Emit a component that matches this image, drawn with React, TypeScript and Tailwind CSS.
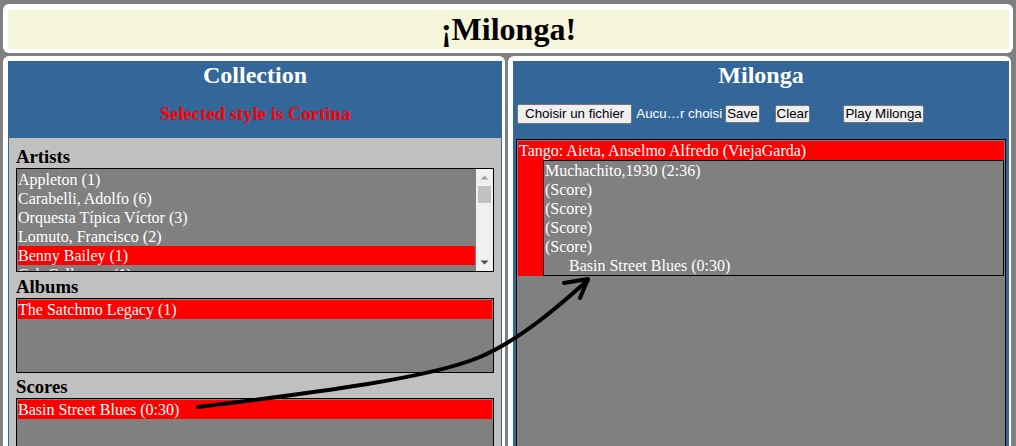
const ARTISTS = [
  "Appleton (1)",
  "Carabelli, Adolfo (6)",
  "Orquesta Típica Víctor (3)",
  "Lomuto, Francisco (2)",
  "Benny Bailey (1)",
  "Cab Calloway (1)",
];

function ListBox({
  items,
  selected,
  height,
  scrollbar,
}: {
  items: string[];
  selected: number;
  height: string;
  scrollbar?: boolean;
}) {
  return (
    <div className={`flex border border-black bg-[#808080] ${height} overflow-hidden`}>
      <div className="flex-1 p-[1px] overflow-hidden">
        {items.map((it, i) => (
          <div
            key={it}
            className={`h-[19px] leading-[19px] whitespace-nowrap text-white ${
              i === selected ? "bg-[#ff0000]" : ""
            }`}
          >
            {it}
          </div>
        ))}
      </div>
      {scrollbar && (
        <div className="w-[17px] bg-[#f0f0f0] flex flex-col items-center">
          <svg width="17" height="17" viewBox="0 0 17 17">
            <path d="M4.5 10.5 L8.5 6.5 L12.5 10.5 Z" fill="#a3a3a3" />
          </svg>
          <div className="w-[13px] h-[17px] bg-[#c1c1c1]" />
          <div className="flex-1" />
          <svg width="17" height="17" viewBox="0 0 17 17">
            <path d="M4.5 6.5 L8.5 10.5 L12.5 6.5 Z" fill="#505050" />
          </svg>
        </div>
      )}
    </div>
  );
}

function Btn({ label, className }: { label: string; className?: string }) {
  return (
    <span
      className={`inline-flex items-center h-[18px] px-[1px] bg-[#efefef] border border-[#767676] rounded-[2px] text-black leading-none ${className ?? ""}`}
    >
      {label}
    </span>
  );
}

export default function App() {
  return (
    <div className="relative h-[446px] w-[1016px] overflow-hidden bg-[#808080] pt-[4px] px-[3px] font-['Liberation_Serif','Times_New_Roman',serif] text-[16px]">
      {/* header */}
      <div className="bg-white rounded-[6px] pt-[6px] pb-[4px] pl-[5px] pr-[4px]">
        <div className="h-[39px] bg-[#f5f5dc] flex items-center justify-center">
          <h1 className="text-[32px] font-bold leading-[39px] text-black">¡Milonga!</h1>
        </div>
      </div>

      <div className="mt-[3px] flex gap-[3px]">
        {/* collection */}
        <div className="w-[502px] h-[420px] bg-white rounded-[6px] pl-[5px] pt-[5px] pr-[3px]">
          <div className="h-full bg-[#336699] px-[1px]">
            <h2 className="text-center text-white text-[24px] font-bold leading-[28px]">Collection</h2>
            <div className="pt-[14px] pb-[13px]">
              <h3 className="text-center text-[#ff0000] text-[18.72px] font-bold leading-[22px]">
                Selected style is Cortina
              </h3>
            </div>
            <div className="bg-[#c0c0c0] h-full px-[7px] pt-[8px]">
              <h3 className="text-[18.72px] font-bold leading-[22px] text-black">Artists</h3>
              <ListBox items={ARTISTS} selected={4} height="h-[104px]" scrollbar />
              <h3 className="mt-[4px] text-[18.72px] font-bold leading-[22px] text-black">Albums</h3>
              <ListBox items={["The Satchmo Legacy (1)"]} selected={0} height="h-[75px]" />
              <h3 className="mt-[3px] text-[18.72px] font-bold leading-[22px] text-black">Scores</h3>
              <ListBox items={["Basin Street Blues (0:30)"]} selected={0} height="h-[120px]" />
            </div>
          </div>
        </div>

        {/* milonga */}
        <div className="w-[503px] h-[420px] bg-white rounded-[6px] pl-[5px] pt-[5px] pr-[2px]">
          <div className="h-full bg-[#336699] px-[3px]">
            <h2 className="text-center text-white text-[24px] font-bold leading-[28px]">Milonga</h2>
            <div className="mt-[15px] h-[20px] flex items-center pl-[1px] font-['Liberation_Sans',Arial,sans-serif] text-[13.33px]">
              <span className="inline-flex items-center h-[20px] px-[7px] bg-[#efefef] border border-[#767676] rounded-[2px] text-black">
                Choisir un fichier
              </span>
              <span className="ml-[4px] text-white">Aucu…r choisi</span>
              <Btn label="Save" className="ml-[3px]" />
              <Btn label="Clear" className="ml-[15px]" />
              <Btn label="Play Milonga" className="ml-[33px]" />
            </div>
            <div className="mt-[15px] h-[400px] border border-black bg-[#808080] p-[1px]">
              <div className="bg-[#ff0000] text-white">
                <div className="h-[19px] leading-[19px] pl-[1px] whitespace-nowrap">
                  Tango: Aieta, Anselmo Alfredo (ViejaGarda)
                </div>
                <div className="ml-[25px] border border-black bg-[#808080] pl-[1px]">
                  <div className="h-[19px] leading-[19px]">Muchachito,1930 (2:36)</div>
                  <div className="h-[19px] leading-[19px]">(Score)</div>
                  <div className="h-[19px] leading-[19px]">(Score)</div>
                  <div className="h-[19px] leading-[19px]">(Score)</div>
                  <div className="h-[19px] leading-[19px]">(Score)</div>
                  <div className="h-[19px] leading-[19px] pl-[24px]">Basin Street Blues (0:30)</div>
                </div>
              </div>
            </div>
          </div>
        </div>
      </div>

      {/* drag arrow */}
      <svg
        className="absolute left-0 top-0 pointer-events-none"
        width="1016"
        height="446"
        viewBox="0 0 1016 446"
        fill="none"
      >
        <path
          d="M198 407 C320 392 430 378 480 357 C520 340 560 305 588 280"
          stroke="#000"
          strokeWidth="4"
          strokeLinecap="round"
          strokeLinejoin="round"
        />
        <path
          d="M564 283 L588 279 L580 298"
          stroke="#000"
          strokeWidth="4"
          strokeLinecap="round"
          strokeLinejoin="round"
        />
      </svg>
    </div>
  );
}
